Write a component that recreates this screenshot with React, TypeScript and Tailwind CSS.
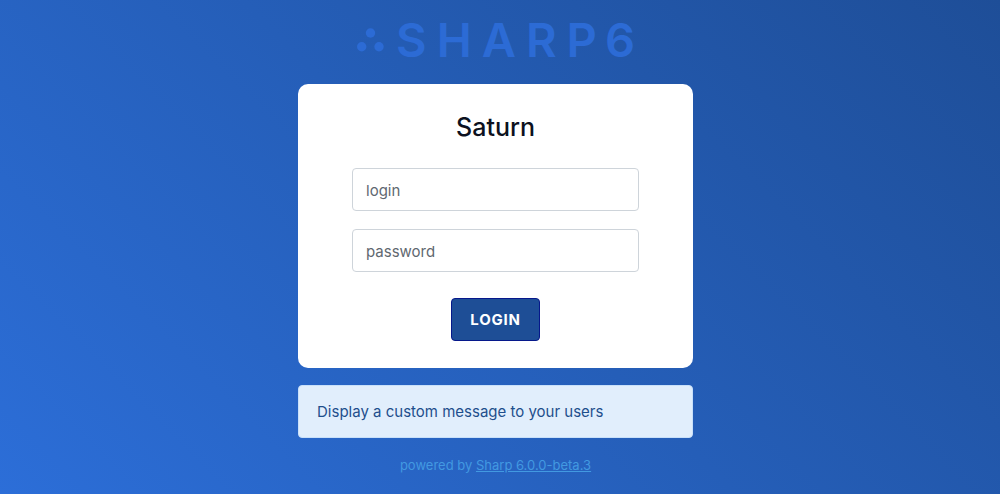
const fieldClass =
  'block h-[43px] w-full rounded border border-[#ced4da] bg-white px-[13px] pt-0.5 text-[15px] text-[#495057] outline-none placeholder:text-[#5f6870] placeholder:opacity-100 focus:border-[#2c6ed8]';

function Logo() {
  return (
    <div className="flex h-9 items-center justify-center text-[#2c6bd5]" role="img" aria-label="Sharp 6">
      <svg className="mr-3 h-6 w-7" viewBox="0 0 28 24" fill="currentColor" aria-hidden="true">
        <circle cx="14.5" cy="5" r="4.7" />
        <circle cx="5.7" cy="18.7" r="4.7" />
        <circle cx="23" cy="18.7" r="4.7" />
      </svg>
      <span className="flex gap-2 text-[47px] leading-9 font-semibold">
        <span className="flex gap-[10px]">
          <span>S</span>
          <span>H</span>
          <span>A</span>
          <span>R</span>
          <span>P</span>
        </span>
        <span>6</span>
      </span>
    </div>
  );
}

export default function App() {
  return (
    <main
      className="flex min-h-screen justify-center bg-linear-45 from-[#2c6ed8] to-[#1e4e98] pt-[22px] pr-[9px]"
      style={{ fontFamily: 'Inter, "Liberation Sans", sans-serif' }}
    >
      <div className="w-full max-w-[395px]">
        <Logo />
        <form
          className="mt-[26px] rounded-[10px] bg-white px-[54px] pt-[27px] pb-[27px]"
          onSubmit={(event) => event.preventDefault()}
        >
          <h1 className="text-center text-[25px] leading-8 font-medium text-[#0c1120]">Saturn</h1>
          <input className={`${fieldClass} mt-[25px]`} type="text" name="login" placeholder="login" aria-label="login" />
          <input
            className={`${fieldClass} mt-[18px]`}
            type="password"
            name="password"
            placeholder="password"
            aria-label="password"
          />
          <div className="mt-[26px] flex justify-center">
            <button
              type="submit"
              className="h-[43px] rounded border border-[#06188b] bg-[#1e4e96] px-[18px] pt-0.5 text-[15px] font-bold tracking-wider text-white uppercase"
            >
              Login
            </button>
          </div>
        </form>
        <p className="mt-[17px] rounded border border-[#c8e0fa] bg-[#e1eefc] px-[18px] pt-[14px] pb-[13px] text-[15px] leading-6 text-[#1e4e8c]">
          Display a custom message to your users
        </p>
        <p className="mt-[17px] text-center text-[13px] leading-5 text-[#4299e1]">
          powered by{' '}
          <a href="#sharp" className="underline">
            Sharp 6.0.0-beta.3
          </a>
        </p>
      </div>
    </main>
  );
}
